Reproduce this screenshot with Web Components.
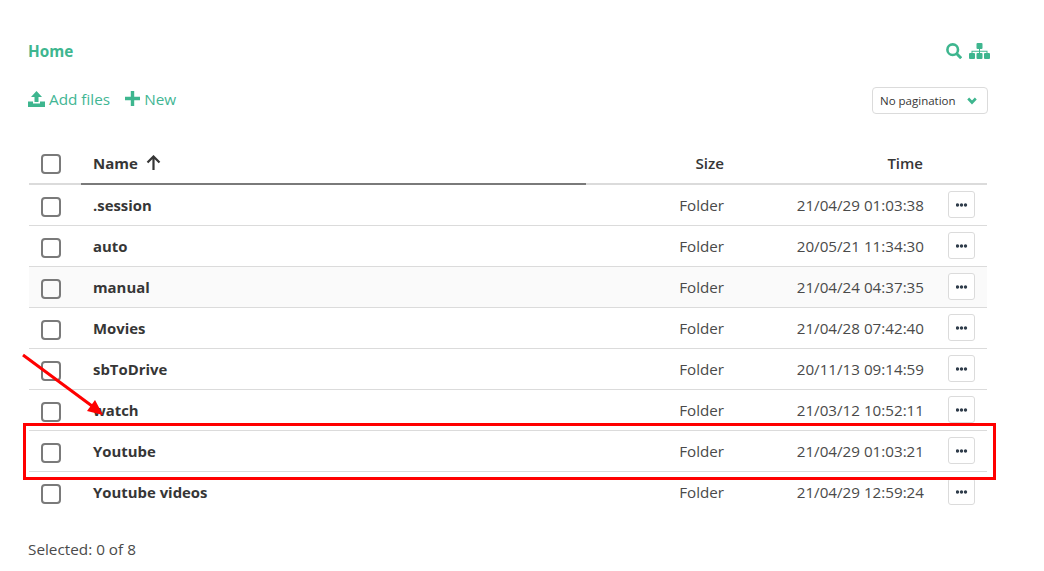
<!DOCTYPE html>
<html><head><meta charset="utf-8"><style>
html,body{margin:0;padding:0;background:#fff}
body{font-family:"Open Sans","Noto Sans",sans-serif;color:#363636;width:1044px;height:571px;overflow:hidden}
</style></head><body>
<template id="t-page"><style>
:host{display:block;position:relative;width:1044px;height:571px;box-sizing:border-box;padding:41px 56px 0 28px}
.bread{display:flex;justify-content:space-between;align-items:center;height:20px}
.home{color:#3eb68f;font-weight:700;font-size:15.3px;line-height:20px}
.icons{display:flex;gap:7px;margin-right:-2px;align-items:center}
.bar{display:flex;justify-content:space-between;align-items:center;margin-top:26px;height:27px}
.acts{display:flex;gap:15px;color:#42b694;font-size:15.3px;margin-top:-4px}
.act{display:flex;align-items:center;gap:4px;line-height:20px}
.sel{box-sizing:border-box;width:116px;height:27px;border:1px solid #dbdbdb;border-radius:4px;font-size:11.5px;display:flex;align-items:center;justify-content:space-between;padding:0 10px 0 7px;color:#363636}
.table{margin-top:29px;margin-left:1px;width:958px}
.foot{margin-top:26px;font-size:15.3px;line-height:20px;color:#4a4a4a}
svg{display:block}
.arrow{position:absolute;left:0;top:0;pointer-events:none}
</style>
<div class="bread"><div class="home">Home</div><div class="icons">
<svg width="16" height="16" viewBox="0 0 16 16"><circle cx="6.700" cy="6.700" r="5.300" fill="none" stroke="#3eb68f" stroke-width="2.600"/><path d="M10.500 10.500 15.200 15.200" stroke="#3eb68f" stroke-width="3" fill="none"/></svg>
<svg width="21" height="16" viewBox="0 0 21 16" fill="#3eb68f"><rect x="7.500" y="0" width="6" height="6" rx="1"/><rect x="0" y="10" width="6" height="6" rx="1"/><rect x="7.500" y="10" width="6" height="6" rx="1"/><rect x="15" y="10" width="6" height="6" rx="1"/><path d="M10 6h1v1.800h7.500V10h-1V8.800h-6.500V10h-1V8.800H3.500V10h-1V7.800H10z"/></svg>
</div></div>
<div class="bar"><div class="acts">
<div class="act"><svg width="17" height="16" viewBox="0 0 17 16" fill="#3eb68f"><path d="M8.500 0 14 6h-3.500v5h-4V6H3z"/><path d="M0 10.500h5v2h7v-2h5V16H0z"/></svg>Add files</div>
<div class="act"><svg width="15" height="15" viewBox="0 0 15 15" fill="#3eb68f"><path d="M5.800 0h3.400v5.800H15v3.400H9.200V15H5.800V9.200H0V5.800h5.800z"/></svg>New</div>
</div><div class="sel"><span>No pagination</span><svg width="10" height="8" viewBox="0 0 10 8"><path d="M1.200 1.500 5 5.500 8.800 1.500" fill="none" stroke="#3eb68f" stroke-width="2.600"/></svg></div></div>
<div class="table"><slot></slot></div>
<div class="foot">Selected: 0 of 8</div>
<svg class="arrow" width="1044" height="571" viewBox="0 0 1044 571"><path d="M23 355 92 406" stroke="#f00" stroke-width="3" fill="none"/><path d="M103 415 87 411 95 400z" fill="#f00"/><rect x="24.500" y="424.500" width="970" height="54" fill="none" stroke="#f00" stroke-width="3"/></svg>
</template>

<template id="t-head"><style>
:host{display:grid;grid-template-columns:52px 505px 138px 199px 64px;height:42px;font-size:15.2px;font-weight:600;color:#363636;line-height:20px}
.c{display:flex;align-items:center;box-sizing:border-box;border-bottom:2px solid #dbdbdb;padding-bottom:1px}
.n{border-bottom-color:#7a7a7a;padding-left:12px;font-weight:700;gap:8px;font-size:15px}
.r{justify-content:flex-end}
.t{font-size:15px}
.cb{box-sizing:border-box;width:20px;height:20px;border:2px solid #7a7a7a;border-radius:4px;margin:3px 0 0 12px}
</style>
<div class="c"><div class="cb"></div></div>
<div class="c n"><span>Name</span><svg width="15" height="15" viewBox="0 0 15 15"><path d="M7.500 15V2M1.500 7.500 7.500 1.500 13.500 7.500" fill="none" stroke="#363636" stroke-width="2.200"/></svg></div>
<div class="c r">Size</div><div class="c r t">Time</div><div class="c"></div>
</template>

<template id="t-row"><style>
:host{display:grid;grid-template-columns:52px 505px 138px 200px 63px;height:41px;box-sizing:border-box;border-bottom:1px solid #dbdbdb;font-size:15.200px;color:#4a4a4a;line-height:20px;align-items:center}
:host([shade]){background:#fafafa}
:host([last]){border-bottom-color:transparent}
.cb{box-sizing:border-box;width:20px;height:20px;border:2px solid #7a7a7a;border-radius:4px;margin:4px 0 0 12px}
.n{padding-left:12px;font-weight:700;color:#363636;font-size:14.900px;margin-top:-1px}
.r{text-align:right}
.m{box-sizing:border-box;width:27px;height:27px;border:1px solid #dbdbdb;border-radius:3px;margin:-1px 0 0 24px;display:flex;align-items:center;justify-content:center;background:#fff}
</style>
<div class="cb"></div><div class="n"><slot></slot></div><div class="r"><slot name="size"></slot></div><div class="r"><slot name="time"></slot></div>
<div class="m"><svg width="12" height="4" viewBox="0 0 12 4" fill="#2f3c4a"><circle cx="1.500" cy="2" r="1.700"/><circle cx="5.500" cy="2" r="1.700"/><circle cx="9.500" cy="2" r="1.700"/></svg></div>
</template>

<file-page>
<file-head></file-head>
<file-row><span>.session</span><span slot="size">Folder</span><span slot="time">21/04/29 01:03:38</span></file-row>
<file-row><span>auto</span><span slot="size">Folder</span><span slot="time">20/05/21 11:34:30</span></file-row>
<file-row shade><span>manual</span><span slot="size">Folder</span><span slot="time">21/04/24 04:37:35</span></file-row>
<file-row><span>Movies</span><span slot="size">Folder</span><span slot="time">21/04/28 07:42:40</span></file-row>
<file-row><span>sbToDrive</span><span slot="size">Folder</span><span slot="time">20/11/13 09:14:59</span></file-row>
<file-row><span>watch</span><span slot="size">Folder</span><span slot="time">21/03/12 10:52:11</span></file-row>
<file-row><span>Youtube</span><span slot="size">Folder</span><span slot="time">21/04/29 01:03:21</span></file-row>
<file-row last><span>Youtube videos</span><span slot="size">Folder</span><span slot="time">21/04/29 12:59:24</span></file-row>
</file-page>
<script>
function def(name,id){customElements.define(name,class extends HTMLElement{constructor(){super();this.attachShadow({mode:"open"}).appendChild(document.getElementById(id).content.cloneNode(true));}});}
def("file-page","t-page");def("file-head","t-head");def("file-row","t-row");
</script>
</body></html>
